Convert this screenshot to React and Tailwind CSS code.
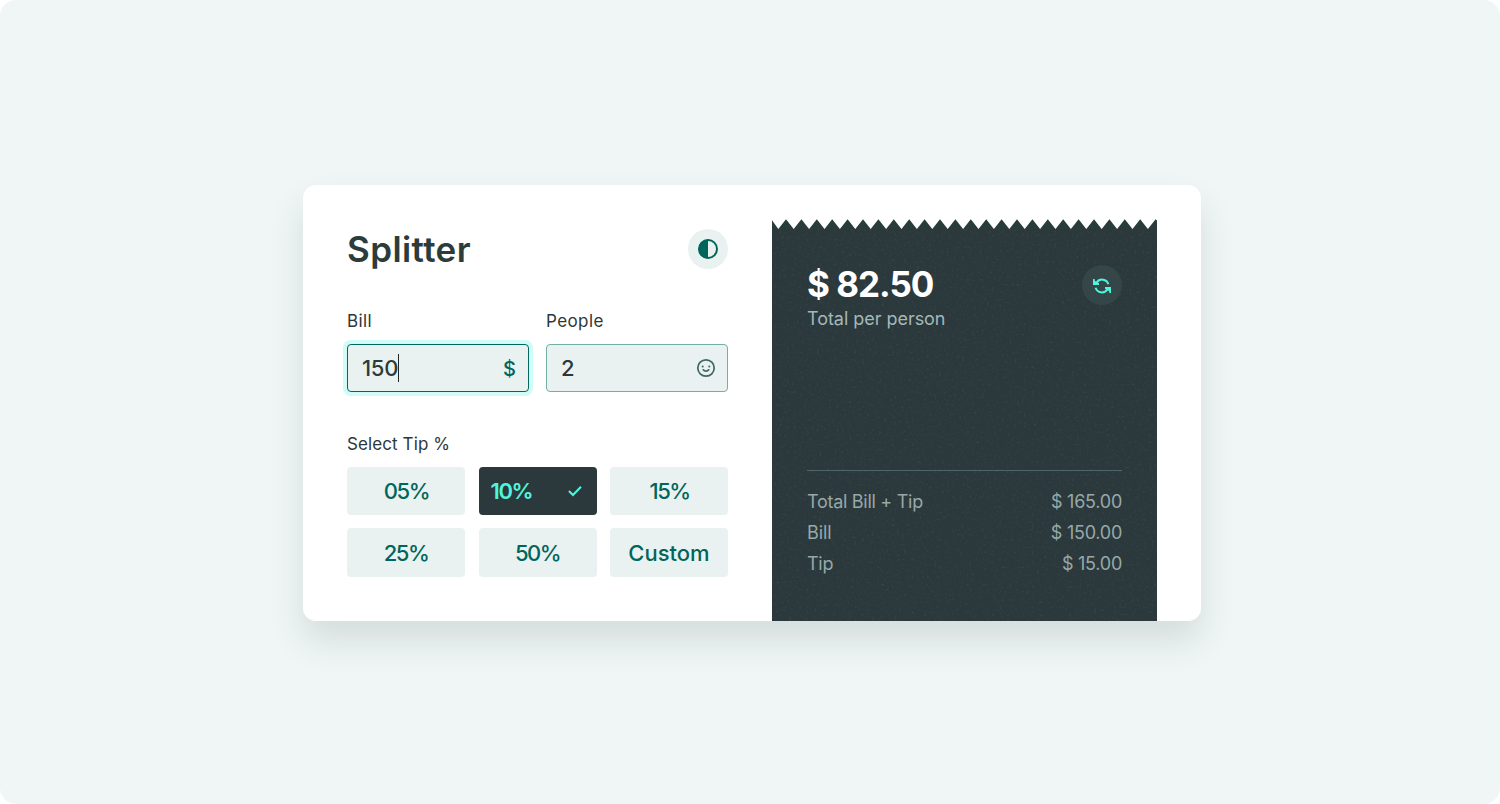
import React from "react";

const tips = ["05%", "10%", "15%", "25%", "50%", "Custom"];
const tipTracking = {
  "05%": "-mr-px tracking-[-1.4px]",
  "10%": "tracking-[-1.4px]",
  "15%": "-mr-px tracking-[-1.6px]",
  "25%": "tracking-[-1.5px]",
  "50%": "tracking-[-1.5px]",
  Custom: "tracking-[0px]",
};

const rows = [
  ["Total Bill + Tip", "$ 165.00", "tracking-[-0.28px]"],
  ["Bill", "$ 150.00", "tracking-[-0.1px]"],
  ["Tip", "$ 15.00", "tracking-[-0.3px]"],
];

const TEETH = 25;
const PITCH = 15.4;
const teeth = Array.from({ length: TEETH }, (_, i) => {
  const peak = 14 + i * PITCH;
  return `${(peak - 7.7).toFixed(1)},10 ${peak.toFixed(1)},0.2`;
}).join(" ");

function ZigZag() {
  return (
    <svg className="block h-[11px] w-[385px]" viewBox="0 0 385 11">
      <polygon points={`0,11 0,1.2 ${teeth} 385,1.6 385,11`} fill="#2a3c39" />
    </svg>
  );
}

function Grain() {
  return (
    <svg className="pointer-events-none absolute inset-0 h-full w-full" aria-hidden="true">
      <filter id="grain" x="0" y="0" width="100%" height="100%">
        <feTurbulence type="fractalNoise" baseFrequency="0.4" numOctaves="2" seed="4" />
        <feColorMatrix values="0 0 0 0 0.4  0 0 0 0 0.54  0 0 0 0 0.54  1.6 0 0 0 -0.92" />
      </filter>
      <rect width="100%" height="100%" filter="url(#grain)" opacity="0.2" />
    </svg>
  );
}

function Field({ label, labelTracking, value, focused, children }) {
  return (
    <div className="w-[182px]">
      <div className="h-[34px] text-[17px] leading-[22px] text-[#2b383b]">
        <span className={labelTracking}>{label}</span>
      </div>
      <div
        className={
          focused
            ? "flex h-12 items-center rounded-[4px] border border-[#00685c] bg-[#eaf2f1] pr-3 pl-[14px] shadow-[0_0_0_4px_#d0fbf6]"
            : "flex h-12 items-center rounded-[4px] border border-[#72b0a7] bg-[#eaf2f1] pr-3 pl-[14px]"
        }
      >
        {value}
        <div className="ml-auto flex items-center">{children}</div>
      </div>
    </div>
  );
}

export default function App() {
  return (
    <div className="h-[804px] w-full bg-white font-[Inter,'Liberation_Sans',sans-serif]">
      <div className="h-full w-full rounded-[16px] bg-[#f0f6f6] pt-[185px] pl-[303px]">
        <div className="flex h-[436px] w-[898px] rounded-[13px] bg-white pl-[44px] shadow-[0_20px_34px_rgba(40,56,54,0.13)]">
          <section className="w-[381px] pt-[44px]">
            <header className="flex h-10 items-center justify-between">
              <h1 className="text-[35px] leading-10 font-semibold tracking-[0.4px] text-[#2b3c3a]">Splitter</h1>
              <button className="flex size-10 items-center justify-center rounded-full bg-[#eaf2f1]">
                <svg className="size-5" viewBox="0 0 20 20">
                  <circle cx="10" cy="10" r="9" fill="none" stroke="#00665b" strokeWidth="2" />
                  <path d="M10 0.5a9.5 9.5 0 0 0 0 19z" fill="#00665b" />
                </svg>
              </button>
            </header>

            <div className="mt-[41px] flex justify-between">
              <Field
                label="Bill"
                labelTracking="tracking-[0.4px]"
                focused
                value={
                  <span className="flex items-center text-[22px] font-medium tracking-[-0.3px] text-[#2b3c3a]">
                    150
                    <span className="h-[28px] w-px bg-[#1d2929]" />
                  </span>
                }
              >
                <span className="pt-px text-[20px] font-medium text-[#00665b]">$</span>
              </Field>
              <Field
                label="People"
                labelTracking="tracking-[0.4px]"
                value={<span className="text-[22px] font-medium text-[#2b383b]">2</span>}
              >
                <svg className="-mr-px size-5" viewBox="0 0 20 20" fill="none" stroke="#3f6661" strokeWidth="1.7">
                  <circle cx="10" cy="10" r="8.2" />
                  <path d="M7.3 11.8c1.1 1.8 4.3 1.8 5.4 0" strokeLinecap="round" />
                  <circle cx="6.7" cy="8.6" r="1" fill="#3f6661" stroke="none" />
                  <circle cx="13.3" cy="8.6" r="1" fill="#3f6661" stroke="none" />
                </svg>
              </Field>
            </div>

            <div className="mt-[41px] h-[34px] text-[17px] leading-[22px] text-[#2b383b]">
              <span className="tracking-[0.1px]">Select Tip %</span>
            </div>
            <div className="grid grid-cols-[118px_118px_118px] grid-rows-[48px_49px] justify-between gap-y-[13px]">
              {tips.map((tip) =>
                tip === "10%" ? (
                  <button
                    key={tip}
                    className="flex items-center justify-between rounded-[4px] bg-[#2b383c] pr-[15px] pl-3 text-[22px] font-semibold text-[#4ff5dd]"
                  >
                    <span className={tipTracking[tip]}>{tip}</span>
                    <svg className="-mt-px h-3 w-[14px]" viewBox="0 0 14 12" fill="none" stroke="currentColor" strokeWidth="2">
                      <path d="M0.9 6L5 10L13 1.8" />
                    </svg>
                  </button>
                ) : (
                  <button
                    key={tip}
                    className="flex items-center justify-center rounded-[4px] bg-[#eaf2f1] pt-px text-[22px] font-medium text-[#00665b]"
                  >
                    <span className={tipTracking[tip]}>{tip}</span>
                  </button>
                ),
              )}
            </div>
          </section>

          <section className="ml-[44px] w-[385px] pt-[34px]">
            <ZigZag />
            <div className="relative -mt-px h-[392px] bg-[#2b383c]">
              <Grain />
              <div className="relative flex h-full flex-col px-[35px] pt-[36px]">
                <div className="flex justify-between">
                  <div>
                    <div className="-mt-px text-[35px] leading-[40px] font-bold tracking-[-1px] text-white">$ 82.50</div>
                    <div className="mt-[4px] text-[18px] leading-[22px] tracking-[-0.04px] text-[#a3b8b8]">
                      Total per person
                    </div>
                  </div>
                  <button className="flex size-10 items-center justify-center rounded-full bg-[#354649] text-[#4ff5dd]">
                    <svg className="mt-px size-[18px]" viewBox="0 0 18 18" fill="none" stroke="currentColor" strokeWidth="2">
                      <path d="M3.6 5.6A6.6 6.6 0 0 1 15.4 7.2M14.4 12.4A6.6 6.6 0 0 1 2.6 10.8" />
                      <path d="M0 2L1.6 2L1.9 4L3.4 4.8L6 6.2V8H0ZM18 16L16.4 16L16.1 14L14.6 13.2L12 11.8V10H18Z" fill="currentColor" stroke="none" />
                    </svg>
                  </button>
                </div>
                <div className="mt-[140px] border-t border-[#4f6669] pt-[15px]">
                  {rows.map(([name, amount, tracking]) => (
                    <div key={name} className="flex h-[31px] items-center justify-between text-[18px] text-[#97a9a8]">
                      <span className={tracking}>{name}</span>
                      <span className="tracking-[-0.25px]">{amount}</span>
                    </div>
                  ))}
                </div>
              </div>
            </div>
          </section>
        </div>
      </div>
    </div>
  );
}
